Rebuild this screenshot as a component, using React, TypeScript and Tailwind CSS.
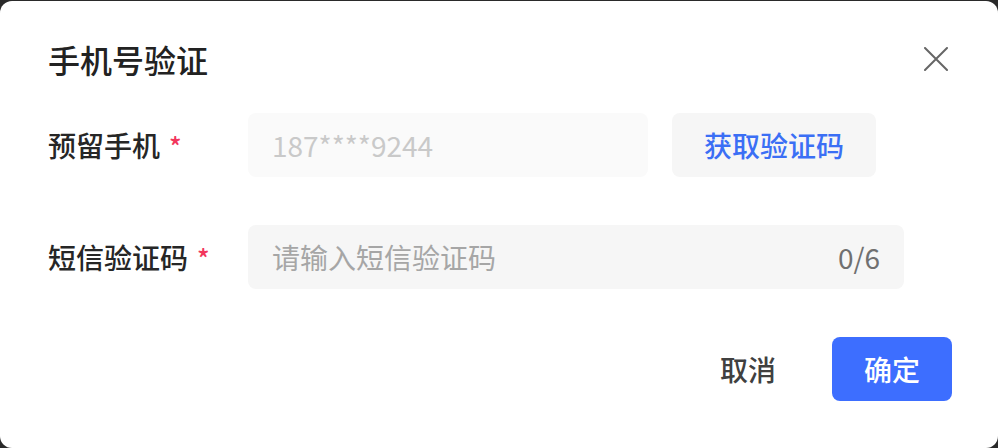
import React from "react"

const font = { fontFamily: '"Noto Sans CJK SC", "Noto Sans", sans-serif' }

function CloseIcon() {
    return (
        <svg width="24" height="24" viewBox="0 0 24 24" fill="none">
            <path d="M1 1L23 23M23 1L1 23" stroke="#666666" strokeWidth="2" strokeLinecap="round" />
        </svg>
    )
}

function Label({ text }: { text: string }) {
    return (
        <div className="w-[200px] shrink-0 flex items-center text-[28px] font-medium text-[#262626]">
            {text}
            <span className="ml-[9px] text-[26px] text-[#f2365c]">*</span>
        </div>
    )
}

export default function App() {
    return (
        <div className="w-[998px] h-[448px] bg-[#2a2a2a] overflow-hidden" style={font}>
            <div className="mt-px h-[447px] rounded-[12px] bg-white pl-12 pr-[46px]">
                {/* Header */}
                <div className="flex items-center justify-between pt-[38px] h-[78px]">
                    <h1 className="text-[32px] leading-10 font-medium text-[#222222]">手机号验证</h1>
                    <button className="p-0 mr-1">
                        <CloseIcon />
                    </button>
                </div>

                {/* Phone row */}
                <div className="mt-[34px] flex items-center h-16">
                    <Label text="预留手机" />
                    <div className="w-[400px] h-16 rounded-[8px] bg-[#fafafa] px-6 flex items-center text-[28px] text-[#c9c9c9]">
                        187****9244
                    </div>
                    <button className="ml-6 w-[204px] h-16 rounded-[8px] bg-[#f6f6f6] text-[28px] font-medium text-[#3b6ff5]">
                        获取验证码
                    </button>
                </div>

                {/* Code row */}
                <div className="mt-12 flex items-center h-16">
                    <Label text="短信验证码" />
                    <div className="w-[656px] h-16 rounded-[8px] bg-[#f6f6f6] px-6 flex items-center justify-between text-[28px]">
                        <span className="text-[#a6a6a6]">请输入短信验证码</span>
                        <span className="text-[#707070]">0/6</span>
                    </div>
                </div>

                {/* Footer */}
                <div className="mt-12 flex justify-end gap-6">
                    <button className="w-[120px] h-16 text-[28px] font-medium text-[#404040]">取消</button>
                    <button className="w-[120px] h-16 rounded-[8px] bg-[#3d6eff] text-[28px] font-medium text-white">
                        确定
                    </button>
                </div>
            </div>
        </div>
    )
}
